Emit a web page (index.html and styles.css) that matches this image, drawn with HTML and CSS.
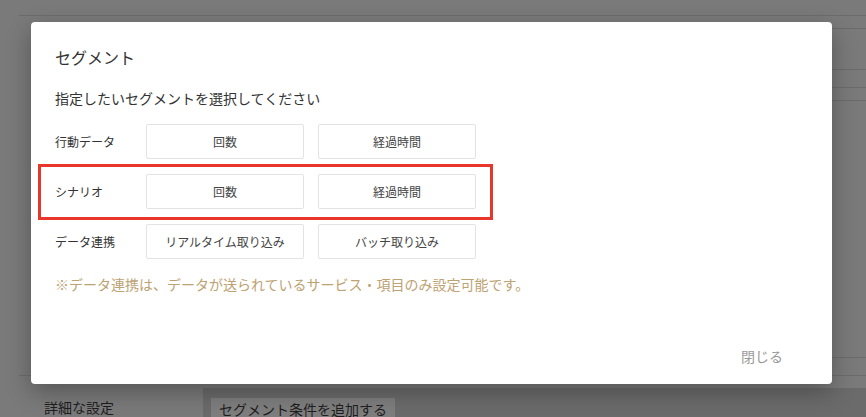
FILE: index.html
```html
<!DOCTYPE html>
<html lang="ja">
  <head>
    <meta charset="utf-8" />
    <meta name="viewport" content="width=device-width, initial-scale=1.0" />
    <title>セグメント</title>
    <link rel="stylesheet" href="styles.css">
  </head>
  <body>
    <div class="page">
      <div class="topbar"></div>
      <div class="panel">
        <div class="panel-row r1"></div>
        <div class="panel-row r2"></div>
        <div class="panel-row r3"></div>
        <div class="panel-row r4"></div>
        <div class="panel-row r5"></div>
      </div>
      <div class="spacer"></div>
      <div class="settings">
        <div class="settings-row">
          <div class="settings-label">詳細な設定</div>
          <div class="settings-value">
            <button type="button" class="add-condition">セグメント条件を追加する</button>
          </div>
        </div>
      </div>
    </div>

    <div class="modal">
      <h2 class="modal-title">セグメント</h2>
      <p class="modal-lead">指定したいセグメントを選択してください</p>
      <div class="segment-row">
        <span class="segment-label">行動データ</span>
        <button type="button" class="segment-btn">回数</button>
        <button type="button" class="segment-btn">経過時間</button>
      </div>
      <div class="segment-row highlight">
        <span class="segment-label">シナリオ</span>
        <button type="button" class="segment-btn">回数</button>
        <button type="button" class="segment-btn">経過時間</button>
      </div>
      <div class="segment-row">
        <span class="segment-label">データ連携</span>
        <button type="button" class="segment-btn">リアルタイム取り込み</button>
        <button type="button" class="segment-btn">バッチ取り込み</button>
      </div>
      <p class="note">※データ連携は、データが送られているサービス・項目のみ設定可能です。</p>
      <div class="modal-footer">
        <button type="button" class="close-btn">閉じる</button>
      </div>
    </div>
  </body>
</html>
```

FILE: styles.css
```css
:root {
  --overlay: #7a7a7a;
  --line: #6c6c6c;
  --text: #333333;
  --muted: #9a9a9a;
  --note: #bda272;
  --border: #e3e3e3;
  --mark: #e8372a;
}

* {
  box-sizing: border-box;
}

html,
body {
  margin: 0;
  height: 100%;
}

body {
  font-family: "Noto Sans CJK JP", "Noto Sans", sans-serif;
  background-color: var(--overlay);
  color: var(--text);
  overflow: hidden;
}

button {
  font-family: inherit;
  cursor: pointer;
}

/* dimmed page behind the dialog */
.page {
  padding-left: 19px;
}

.topbar {
  height: 16px;
  border-bottom: 1px solid var(--line);
}

.panel {
  margin-left: 400px;
}

.panel-row {
  border-bottom: 1px solid var(--line);
}

.r1 { height: 13px; }
.r2 { height: 41px; }
.r3 { height: 18px; }
.r4 { height: 13px; }
.r5 { height: 257px; }

.spacer {
  height: 17px;
}

.settings {
  border-top: 1px solid var(--line);
}

.settings-row {
  display: flex;
  margin-top: 12px;
}

.settings-label {
  width: 184px;
  padding: 8px 0 0 25px;
  font-size: 14px;
  line-height: 22px;
  color: #1e1e1e;
}

.settings-value {
  flex: 1;
  background-color: #6b6b6b;
  padding: 8px;
}

.add-condition {
  border: none;
  background-color: #7e7e7e;
  color: #1e1e1e;
  font-size: 14px;
  line-height: 22px;
  padding: 0 8px;
  height: 22px;
}

/* dialog */
.modal {
  position: absolute;
  left: 31px;
  top: 22px;
  width: 801px;
  height: 362px;
  background-color: #fff;
  border-radius: 4px;
  box-shadow: 0 8px 24px rgba(0, 0, 0, 0.3);
  padding: 23px 24px 12px;
  display: flex;
  flex-direction: column;
  align-items: flex-start;
}

.modal-title {
  margin: 0;
  font-size: 16px;
  font-weight: normal;
  line-height: 24px;
}

.modal-lead {
  margin: 19px 0 16px;
  font-size: 14px;
  line-height: 20px;
}

.segment-row {
  position: relative;
  display: flex;
  align-items: center;
  gap: 14px;
  margin-bottom: 15px;
}

.segment-row.highlight::after {
  content: "";
  position: absolute;
  top: -10px;
  bottom: -11px;
  left: -17px;
  right: -17px;
  border: 3px solid var(--mark);
  pointer-events: none;
}

.segment-label {
  width: 77px;
  font-size: 12px;
}

.segment-btn {
  width: 158px;
  height: 35px;
  background-color: #fff;
  border: 1px solid var(--border);
  border-radius: 2px;
  color: #444;
  font-size: 12px;
}

.note {
  margin: 0;
  font-size: 14px;
  line-height: 20px;
  color: var(--note);
}

.modal-footer {
  margin-top: auto;
  align-self: stretch;
  display: flex;
  justify-content: flex-end;
}

.close-btn {
  border: none;
  background: none;
  color: var(--muted);
  font-size: 14px;
  line-height: 20px;
  padding: 6px 25px;
}
```
